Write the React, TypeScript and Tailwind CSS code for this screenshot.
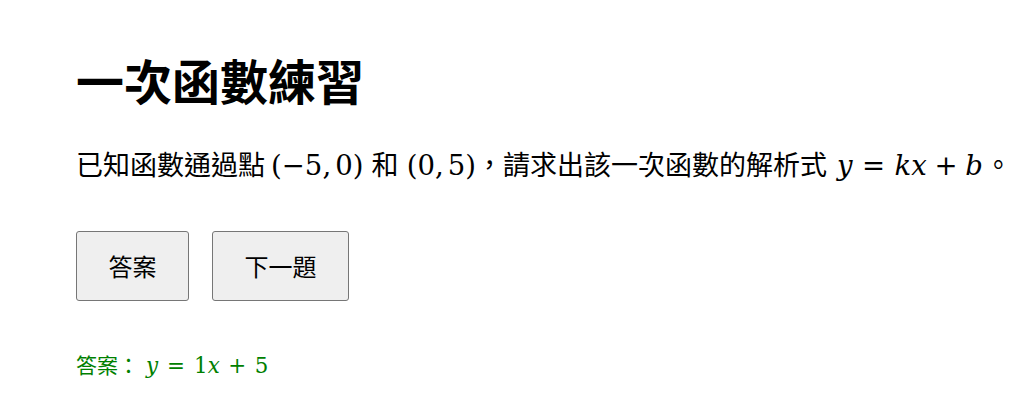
import React from "react";

const cjk = "font-['Noto_Sans_CJK_TC','Noto_Sans_CJK_SC',sans-serif]";
const mathFont = "font-['DejaVu_Serif','Liberation_Serif',serif]";

function M({ children, className = "" }: { children: React.ReactNode; className?: string }) {
  return <span className={`${mathFont} text-[1.02em] leading-none ${className}`}>{children}</span>;
}

function V({ children }: { children: React.ReactNode }) {
  return <span className="italic">{children}</span>;
}

function Op({ children, w = "mx-[0.34em]" }: { children: React.ReactNode; w?: string }) {
  return <span className={w}>{children}</span>;
}

export default function App() {
  return (
    <div className={`min-h-screen w-full bg-white text-black px-[76px] pt-[55px] ${cjk}`}>
      {/* Title */}
      <h1 className="text-[48px] font-bold leading-none">一次函數練習</h1>

      {/* Question */}
      <p className="mt-[41px] text-[27px] leading-[40px] whitespace-nowrap">
        已知函數通過點 <M className="mr-[2px]">(−5,<span className="ml-[0.15em]">0</span>)</M> 和{" "}
        <M className="ml-[2px]">(0,<span className="ml-[0.15em]">5</span>)</M>，請求出該一次函數的解析式
        <M className="ml-[10px] mr-[2px]">
          <V>y</V>
          <Op>=</Op>
          <V>kx</V>
          <Op w="mx-[0.28em]">+</Op>
          <V>b</V>
        </M>
        。
      </p>

      {/* Buttons */}
      <div className="mt-[47px] flex gap-[23px]">
        <button className="h-[70px] w-[113px] rounded-[3px] border border-[#767676] bg-[#efefef] text-[24px]">
          答案
        </button>
        <button className="h-[70px] w-[137px] rounded-[3px] border border-[#767676] bg-[#efefef] text-[24px]">
          下一題
        </button>
      </div>

      {/* Answer */}
      <p className="mt-[48px] text-[21px] leading-[30px] text-[#008000] whitespace-nowrap">
        答案：
        <M className="ml-[7px] text-[1.1em]">
          <V>y</V>
          <Op w="mx-[0.42em]">=</Op>
          1<V>x</V>
          <Op w="mx-[0.4em]">+</Op>5
        </M>
      </p>
    </div>
  );
}
